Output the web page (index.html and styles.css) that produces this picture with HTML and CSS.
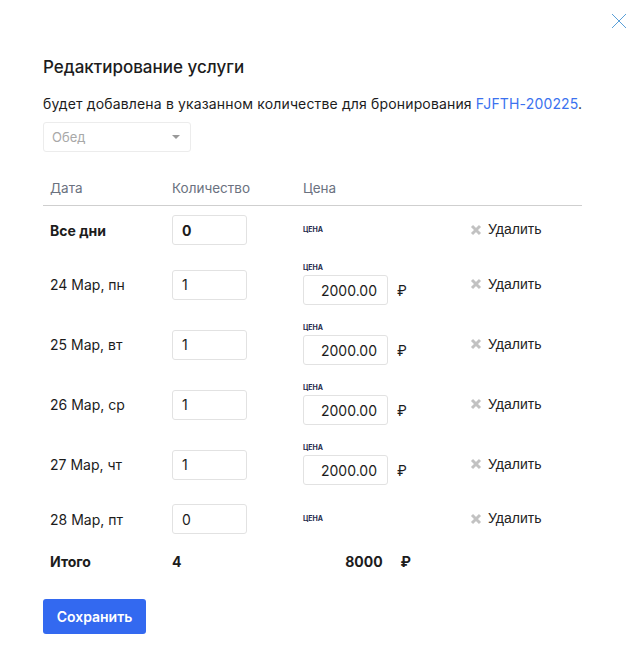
FILE: index.html
```html
<!DOCTYPE html>
<html lang="ru">
<head>
    <meta charset="UTF-8">
    <title>Редактирование услуги</title>
    <link rel="stylesheet" href="styles.css">
</head>
<body>
    <div class="modal">
        <button class="close" aria-label="Закрыть">
            <svg width="16" height="16" viewBox="0 0 16 16"><path d="M1 1L15 15M15 1L1 15" stroke="#5aa0d8" stroke-width="1"/></svg>
        </button>
        <h1>Редактирование услуги</h1>
        <p class="info">будет добавлена в указанном количестве для бронирования <a href="#">FJFTH-200225</a>.</p>
        <div class="select">
            <span>Обед</span>
            <span class="arrow"></span>
        </div>

        <table class="services">
            <thead>
                <tr>
                    <th class="col-date">Дата</th>
                    <th class="col-qty">Количество</th>
                    <th class="col-price">Цена</th>
                    <th class="col-del"></th>
                </tr>
            </thead>
            <tbody>
                <tr class="all-days">
                    <td class="col-date"><strong>Все дни</strong></td>
                    <td class="col-qty"><input class="qty bold" type="text" value="0"></td>
                    <td class="col-price"><span class="price-label">ЦЕНА</span></td>
                    <td class="col-del"><span class="del"><svg width="12" height="12" viewBox="0 0 12 12"><path d="M2 2L10 10M10 2L2 10" stroke="#c2c2c2" stroke-width="3"/></svg>Удалить</span></td>
                </tr>
                <tr>
                    <td class="col-date">24 Мар, пн</td>
                    <td class="col-qty"><input class="qty" type="text" value="1"></td>
                    <td class="col-price">
                        <span class="price-label">ЦЕНА</span>
                        <div class="price-row"><input class="price" type="text" value="2000.00"><span class="rub">₽</span></div>
                    </td>
                    <td class="col-del"><span class="del"><svg width="12" height="12" viewBox="0 0 12 12"><path d="M2 2L10 10M10 2L2 10" stroke="#c2c2c2" stroke-width="3"/></svg>Удалить</span></td>
                </tr>
                <tr>
                    <td class="col-date">25 Мар, вт</td>
                    <td class="col-qty"><input class="qty" type="text" value="1"></td>
                    <td class="col-price">
                        <span class="price-label">ЦЕНА</span>
                        <div class="price-row"><input class="price" type="text" value="2000.00"><span class="rub">₽</span></div>
                    </td>
                    <td class="col-del"><span class="del"><svg width="12" height="12" viewBox="0 0 12 12"><path d="M2 2L10 10M10 2L2 10" stroke="#c2c2c2" stroke-width="3"/></svg>Удалить</span></td>
                </tr>
                <tr>
                    <td class="col-date">26 Мар, ср</td>
                    <td class="col-qty"><input class="qty" type="text" value="1"></td>
                    <td class="col-price">
                        <span class="price-label">ЦЕНА</span>
                        <div class="price-row"><input class="price" type="text" value="2000.00"><span class="rub">₽</span></div>
                    </td>
                    <td class="col-del"><span class="del"><svg width="12" height="12" viewBox="0 0 12 12"><path d="M2 2L10 10M10 2L2 10" stroke="#c2c2c2" stroke-width="3"/></svg>Удалить</span></td>
                </tr>
                <tr>
                    <td class="col-date">27 Мар, чт</td>
                    <td class="col-qty"><input class="qty" type="text" value="1"></td>
                    <td class="col-price">
                        <span class="price-label">ЦЕНА</span>
                        <div class="price-row"><input class="price" type="text" value="2000.00"><span class="rub">₽</span></div>
                    </td>
                    <td class="col-del"><span class="del"><svg width="12" height="12" viewBox="0 0 12 12"><path d="M2 2L10 10M10 2L2 10" stroke="#c2c2c2" stroke-width="3"/></svg>Удалить</span></td>
                </tr>
                <tr>
                    <td class="col-date">28 Мар, пт</td>
                    <td class="col-qty"><input class="qty" type="text" value="0"></td>
                    <td class="col-price"><span class="price-label">ЦЕНА</span></td>
                    <td class="col-del"><span class="del"><svg width="12" height="12" viewBox="0 0 12 12"><path d="M2 2L10 10M10 2L2 10" stroke="#c2c2c2" stroke-width="3"/></svg>Удалить</span></td>
                </tr>
            </tbody>
            <tfoot>
                <tr>
                    <td class="col-date">Итого</td>
                    <td class="col-qty">4</td>
                    <td class="col-price"><div class="total"><span class="sum">8000</span><span class="rub">₽</span></div></td>
                    <td class="col-del"></td>
                </tr>
            </tfoot>
        </table>

        <button class="save">Сохранить</button>
    </div>
</body>
</html>
```

FILE: styles.css
```css
body {
    margin: 0;
    background-color: #fff;
    font-family: Inter, "Noto Sans", sans-serif;
    color: #1c1c1c;
}

.modal {
    position: relative;
    width: 539px;
    padding: 57px 56px 22px 43px;
}

.close {
    position: absolute;
    top: 13px;
    right: 11px;
    border: none;
    background: none;
    padding: 0;
    cursor: pointer;
}

h1 {
    margin: 0;
    font-size: 17px;
    font-weight: 500;
    line-height: 20px;
}

.info {
    margin: 17px 0 0;
    font-size: 14px;
    line-height: 20px;
    letter-spacing: 0.15px;
    white-space: nowrap;
}

.info a {
    color: #3b72ef;
    text-decoration: none;
}

.select {
    width: 130px;
    height: 28px;
    margin-top: 8px;
    padding: 0 8px;
    border: 1px solid #ececec;
    border-radius: 3px;
    display: flex;
    align-items: center;
    justify-content: space-between;
    font-size: 13px;
    color: #a8a8a8;
}

.arrow {
    width: 0;
    height: 0;
    border-left: 4px solid transparent;
    border-right: 4px solid transparent;
    border-top: 4px solid #999;
    margin-right: 2px;
}

.services {
    width: 539px;
    margin-top: 20px;
    border-collapse: collapse;
    font-size: 14px;
}

.services th {
    text-align: left;
    font-weight: 400;
    font-size: 13.5px;
    color: #6b7280;
    height: 33px;
    padding: 0 0 0 7px;
    border-bottom: 1px solid #cfcfcf;
    vertical-align: top;
    line-height: 33px;
}

.services td {
    padding: 9px 0 10px 7px;
    vertical-align: middle;
    line-height: 17px;
}

.col-date { width: 115px; }
.col-qty { width: 124px; }
.col-price { width: 160px; }

input {
    display: block;
    box-sizing: border-box;
    height: 30px;
    border: 1px solid #e2e2e2;
    border-radius: 3px;
    font-family: Inter, "Noto Sans", sans-serif;
    font-size: 14px;
    color: #1c1c1c;
    outline: none;
}

.qty {
    width: 75px;
    padding: 0 9px;
}

.qty.bold {
    font-weight: 700;
}

.price {
    width: 85px;
    padding: 0 10px;
    text-align: right;
}

.price-label {
    display: block;
    font-size: 7px;
    font-weight: 700;
    line-height: 8px;
    color: #1f2b4d;
    margin-bottom: 3px;
}

.all-days .price-label,
tbody tr:last-child .price-label {
    margin: 0;
}

.price-row {
    display: flex;
    align-items: center;
}

.rub {
    margin-left: 9px;
    font-size: 14px;
}

.del {
    font-family: "Liberation Sans", Arial, sans-serif;
    font-size: 14px;
    color: #222;
    display: inline-flex;
    align-items: center;
}

.del svg {
    margin-right: 6px;
}

tfoot td {
    font-weight: 700;
    padding-top: 6px;
    padding-bottom: 7px;
}

.total {
    display: flex;
    align-items: center;
    justify-content: flex-end;
    width: 108px;
}

.total .rub {
    margin-left: 18px;
}

.save {
    display: block;
    margin-top: 19px;
    width: 103px;
    height: 35px;
    border: none;
    border-radius: 3px;
    background-color: #3369f0;
    color: #fff;
    font-family: Inter, "Noto Sans", sans-serif;
    font-size: 14px;
    font-weight: 600;
    cursor: pointer;
}
```
